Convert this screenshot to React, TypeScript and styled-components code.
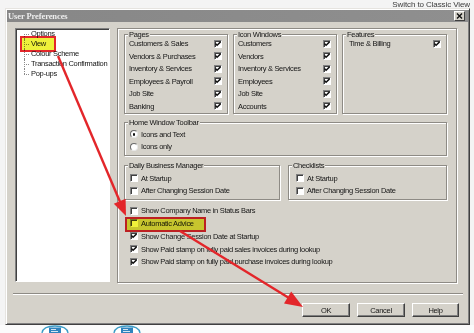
import styled, { createGlobalStyle } from "styled-components";

const GlobalStyle = createGlobalStyle`
  html, body { margin: 0; padding: 0; }
  body {
    width: 474px;
    height: 333px;
    overflow: hidden;
    background: #f4f4f4;
    font-family: "Liberation Sans", Arial, sans-serif;
    color: #151515;
  }
`;

const FACE = "#d5d2ca";

const Screen = styled.div`
  position: relative;
  width: 474px;
  height: 333px;
  display: flex;
  flex-direction: column;
  overflow: hidden;
  background: #f4f4f4;
`;

const TopStrip = styled.div`
  height: 8px;
  flex: none;
  display: flex;
  justify-content: flex-end;
  align-items: flex-end;
  padding-right: 4px;
  overflow: hidden;
`;

const ClassicLink = styled.span`
  font-size: 8px;
  line-height: 6px;
  letter-spacing: -0.1px;
  color: #3a3a3a;
`;

const Middle = styled.div`
  display: flex;
  height: 317px;
  flex: none;
`;

const Gutter = styled.div<{ $w: number }>`
  width: ${p => p.$w}px;
  flex: none;
`;

const Dialog = styled.div`
  width: 465px;
  height: 317px;
  box-sizing: border-box;
  flex: none;
  background: ${FACE};
  border: 1px solid;
  border-color: #e6e4e0 #404040 #404040 #e6e4e0;
  box-shadow: inset 1px 1px #fff, inset -1px -1px #808080;
  padding: 1px;
  display: flex;
  flex-direction: column;
`;

const TitleBar = styled.div`
  height: 12px;
  flex: none;
  display: flex;
  align-items: center;
  justify-content: space-between;
  background: linear-gradient(to right, #878787, #8f8f8f);
`;

const TitleText = styled.span`
  font-family: "Liberation Serif", "Times New Roman", serif;
  font-weight: bold;
  font-size: 8.5px;
  color: #eeeeee;
  padding-left: 1px;
  letter-spacing: -0.1px;
`;

const CloseButton = styled.span`
  width: 11px;
  height: 10px;
  box-sizing: border-box;
  margin-right: 3px;
  background: ${FACE};
  border: 1px solid;
  border-color: #fff #404040 #404040 #fff;
  display: flex;
  align-items: center;
  justify-content: center;
`;

const Body = styled.div`
  flex: 1;
  display: flex;
  flex-direction: column;
  padding: 6px 11px 6px 8px;
  font-size: 7.5px;
  letter-spacing: -0.3px;
`;

const ContentRow = styled.div`
  display: flex;
  gap: 7px;
  height: 255px;
  flex: none;
`;

const TreeBox = styled.div`
  width: 95px;
  height: 254px;
  box-sizing: border-box;
  background: #fff;
  border: 1px solid;
  border-color: #808080 #fff #fff #808080;
  box-shadow: inset 1px 1px #404040;
  padding-left: 8px;
`;

const TreeList = styled.ul`
  list-style: none;
  margin: 0;
  padding: 0;
`;

const TreeRow = styled.li<{ $first?: boolean; $last?: boolean }>`
  position: relative;
  height: 10px;
  line-height: 10px;
  padding-left: 7px;
  white-space: nowrap;

  &::before {
    content: "";
    position: absolute;
    left: 0;
    top: ${p => (p.$first ? "5px" : "0")};
    height: ${p => (p.$last || p.$first ? "5px" : "10px")};
    border-left: 1px dotted #8a8a8a;
  }

  &::after {
    content: "";
    position: absolute;
    left: 0;
    top: 5px;
    width: 5px;
    border-top: 1px dotted #8a8a8a;
  }
`;

const Panel = styled.div`
  flex: 1;
  box-sizing: border-box;
  border: 1px solid #8e8b85;
  box-shadow: inset 1px 1px #fff, 1px 1px #fff;
  padding: 1.5px 9px 0 6px;
  display: flex;
  flex-direction: column;
`;

const GroupRow = styled.div<{ $gap: number; $top?: number }>`
  display: flex;
  gap: ${p => p.$gap}px;
  margin-top: ${p => p.$top ?? 0}px;
`;

const Group = styled.fieldset<{ $w?: number; $pt?: number; $pb?: number }>`
  box-sizing: border-box;
  margin: 0;
  min-width: 0;
  ${p => (p.$w ? `width: ${p.$w}px; flex: none;` : "flex: 1;")}
  padding: ${p => p.$pt ?? 0}px 5px ${p => p.$pb ?? 0}px 4px;
  border: 1px solid #8e8b85;
  box-shadow: inset 1px 1px #fff, 1px 1px #fff;
`;

const Legend = styled.legend`
  font-size: 7.5px;
  line-height: 7px;
  padding: 0 1px;
  margin-left: -1px;
  background: ${FACE};
  white-space: nowrap;
`;

const Row = styled.div<{ $h?: number; $spread?: boolean; $indent?: number }>`
  display: flex;
  align-items: center;
  gap: 3px;
  height: ${p => p.$h ?? 12.5}px;
  padding-left: ${p => p.$indent ?? 0}px;
  justify-content: ${p => (p.$spread ? "space-between" : "flex-start")};
  white-space: nowrap;
`;

const Box = styled.span`
  width: 8px;
  height: 8px;
  flex: none;
  box-sizing: border-box;
  background: #fff;
  border: 1px solid;
  border-color: #808080 #fff #fff #808080;
  box-shadow: inset 1px 1px #404040;
  display: flex;
  align-items: center;
  justify-content: center;
`;

const RadioDot = styled.span<{ $on?: boolean }>`
  width: 8px;
  height: 8px;
  flex: none;
  box-sizing: border-box;
  border-radius: 50%;
  background: #fff;
  border: 1px solid;
  border-color: #6a6a6a #e8e8e8 #e8e8e8 #6a6a6a;
  display: flex;
  align-items: center;
  justify-content: center;

  &::after {
    content: "";
    width: 2.5px;
    height: 2.5px;
    border-radius: 50%;
    background: ${p => (p.$on ? "#111" : "transparent")};
  }
`;

const PlainList = styled.div`
  margin-top: 4.3px;
  padding-left: 6px;
`;

const Separator = styled.div`
  margin: 10px -6px 0 -2px;
  border-top: 1px solid #8e8b85;
  border-bottom: 1px solid #fff;
`;

const ButtonRow = styled.div`
  display: flex;
  justify-content: flex-end;
  gap: 7px;
  margin: 8px -2px 0 0;
`;

const Button = styled.div<{ $w: number }>`
  width: ${p => p.$w}px;
  height: 14px;
  box-sizing: border-box;
  border: 1px solid;
  border-color: #fff #404040 #404040 #fff;
  box-shadow: inset -1px -1px #808080;
  display: flex;
  align-items: center;
  justify-content: center;
`;

const BottomStrip = styled.div`
  height: 8px;
  flex: none;
  display: flex;
  gap: 42px;
  padding-left: 40px;
  background: #fbfbfb;
  overflow: hidden;
`;

const Highlight = styled.div<{ $x: number; $y: number; $w: number; $h: number }>`
  position: absolute;
  left: ${p => p.$x}px;
  top: ${p => p.$y}px;
  width: ${p => p.$w}px;
  height: ${p => p.$h}px;
  box-sizing: border-box;
  border: 2px solid #e3262a;
  background: #eef03a;
  mix-blend-mode: multiply;
`;

const Arrows = styled.svg`
  position: absolute;
  left: 0;
  top: 0;
  pointer-events: none;
`;

const Check = () => (
  <svg width="6" height="6" viewBox="0 0 6 6">
    <polyline points="0.4,2.6 2.1,4.3 5.6,0.8" fill="none" stroke="#111" strokeWidth="1.5" />
  </svg>
);

const CheckBox = ({ on }: { on?: boolean }) => <Box>{on && <Check />}</Box>;

const BlueIcon = () => (
  <svg width="30" height="8" viewBox="0 0 30 8">
    <path d="M2 8 Q3 1 15 1 Q27 1 28 8" fill="#fff" stroke="#3b9cc6" strokeWidth="1.3" />
    <rect x="9" y="2.5" width="12" height="5.5" fill="#2f83bd" />
    <path d="M11 4.5h5M11 6.5h7" stroke="#fff" strokeWidth="0.8" />
  </svg>
);

const pages = ["Customers & Sales", "Vendors & Purchases", "Inventory & Services", "Employees & Payroll", "Job Site", "Banking"];
const iconWindows = ["Customers", "Vendors", "Inventory & Services", "Employees", "Job Site", "Accounts"];
const treeItems = ["Options", "View", "Colour Scheme", "Transaction Confirmation", "Pop-ups"];
const misc = [
  { label: "Show Company Name in Status Bars", on: false },
  { label: "Automatic Advice", on: false },
  { label: "Show Change Session Date at Startup", on: true },
  { label: "Show Paid stamp on fully paid sales invoices during lookup", on: true },
  { label: "Show Paid stamp on fully paid purchase invoices during lookup", on: true },
];

export default function App() {
  return (
    <Screen>
      <GlobalStyle />
      <TopStrip>
        <ClassicLink>Switch to Classic View</ClassicLink>
      </TopStrip>

      <Middle>
        <Gutter $w={5} />
        <Dialog>
          <TitleBar>
            <TitleText>User Preferences</TitleText>
            <CloseButton>
              <svg width="7" height="6" viewBox="0 0 7 6">
                <path d="M1 0.5l5 5M6 0.5l-5 5" stroke="#111" strokeWidth="1.4" />
              </svg>
            </CloseButton>
          </TitleBar>

          <Body>
            <ContentRow>
              <TreeBox>
                <TreeList>
                  {treeItems.map((t, i) => (
                    <TreeRow key={t} $first={i === 0} $last={i === treeItems.length - 1}>
                      {t}
                    </TreeRow>
                  ))}
                </TreeList>
              </TreeBox>

              <Panel>
                <GroupRow $gap={5}>
                  <Group $w={104}>
                    <Legend>Pages</Legend>
                    {pages.map(p => (
                      <Row key={p} $spread>
                        {p}
                        <CheckBox on />
                      </Row>
                    ))}
                  </Group>
                  <Group $w={104}>
                    <Legend>Icon Windows</Legend>
                    {iconWindows.map(p => (
                      <Row key={p} $spread>
                        {p}
                        <CheckBox on />
                      </Row>
                    ))}
                  </Group>
                  <Group $w={105}>
                    <Legend>Features</Legend>
                    <Row $spread $indent={2}>
                      Time &amp; Billing
                      <CheckBox on />
                    </Row>
                  </Group>
                </GroupRow>

                <GroupRow $gap={0} $top={5.5}>
                  <Group $pt={2} $pb={2}>
                    <Legend>Home Window Toolbar</Legend>
                    <Row $indent={1}>
                      <RadioDot $on />
                      Icons and Text
                    </Row>
                    <Row $indent={1}>
                      <RadioDot />
                      Icons only
                    </Row>
                  </Group>
                </GroupRow>

                <GroupRow $gap={8} $top={6}>
                  <Group $w={156} $pt={3} $pb={2}>
                    <Legend>Daily Business Manager</Legend>
                    <Row $indent={1}>
                      <CheckBox />
                      At Startup
                    </Row>
                    <Row $indent={1}>
                      <CheckBox />
                      After Changing Session Date
                    </Row>
                  </Group>
                  <Group $pt={3} $pb={2}>
                    <Legend>Checklists</Legend>
                    <Row $indent={3}>
                      <CheckBox />
                      At Startup
                    </Row>
                    <Row $indent={3}>
                      <CheckBox />
                      After Changing Session Date
                    </Row>
                  </Group>
                </GroupRow>

                <PlainList>
                  {misc.map(m => (
                    <Row key={m.label} $h={12.8}>
                      <CheckBox on={m.on} />
                      {m.label}
                    </Row>
                  ))}
                </PlainList>
              </Panel>
            </ContentRow>

            <Separator />

            <ButtonRow>
              <Button $w={48}>OK</Button>
              <Button $w={48}>Cancel</Button>
              <Button $w={47}>Help</Button>
            </ButtonRow>
          </Body>
        </Dialog>
        <Gutter $w={4} />
      </Middle>

      <BottomStrip>
        <BlueIcon />
        <BlueIcon />
      </BottomStrip>

      <Highlight $x={20} $y={36} $w={36} $h={16} />
      <Highlight $x={125} $y={217} $w={81} $h={15} />

      <Arrows width="474" height="333" viewBox="0 0 474 333">
        <line x1="58" y1="56" x2="120.5" y2="203" stroke="#e3262a" strokeWidth="2.4" />
        <polygon points="126,216 113.8,203.8 125.6,198.8" fill="#e3262a" />
        <line x1="180" y1="231" x2="289" y2="298" stroke="#e3262a" strokeWidth="2.4" />
        <polygon points="303,307 284,303.6 291.2,291.6" fill="#e3262a" />
      </Arrows>
    </Screen>
  );
}
